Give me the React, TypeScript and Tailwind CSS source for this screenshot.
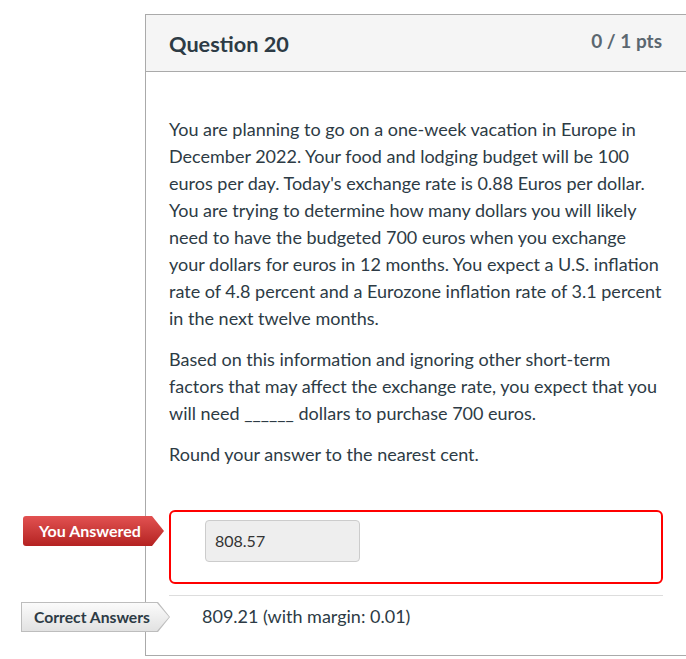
import React from "react";

const arrow = "[clip-path:polygon(0_0,calc(100%-12px)_0,100%_50%,calc(100%-12px)_100%,0_100%)]";

export default function App() {
  return (
    <div
      className="relative w-[686px] h-[659px] overflow-hidden bg-white text-[#2d3b45]"
      style={{ fontFamily: "Lato, 'Noto Sans', sans-serif" }}
    >
      <div className="pt-[14px] pl-[145px]">
        <div className="w-[542px] border-t border-l border-r border-b border-[#aaaaaa]">
          {/* header */}
          <div className="h-[57px] bg-[#f5f5f5] border-b border-[#aaaaaa] flex items-start justify-between pl-[23px] pr-[24px]">
            <h2 className="mt-[14px] text-[21.7px] leading-[30px] font-bold text-[#2d3b45]">Question 20</h2>
            <div className="mt-[13px] text-[19px] leading-[26px] font-bold text-[#5b6770]">0 / 1 pts</div>
          </div>
          {/* body */}
          <div className="pl-[23px] pr-[24px] pt-[44px]">
            <div className="w-[494px] text-[18px] leading-[27px]">
              <p>
                You are planning to go on a one-week vacation in Europe in December 2022. Your food and lodging budget will be 100 euros per day. Today's exchange rate is 0.88 Euros per dollar. You are trying to determine how many dollars you will likely need to have the budgeted 700 euros when you exchange your dollars for euros in 12 months. You expect a U.S. inflation rate of 4.8 percent and a Eurozone inflation rate of 3.1 percent in the next twelve months.
              </p>
              <p className="mt-[14px]">
                Based on this information and ignoring other short-term factors that may affect the exchange rate, you expect that you will need ______ dollars to purchase 700 euros.
              </p>
              <p className="mt-[14px]">Round your answer to the nearest cent.</p>
            </div>

            {/* answered */}
            <div className="relative mt-[42px] w-[494px] h-[74px] border-2 border-[#ff0000] rounded-[6px] pl-[34px] pt-[8px]">
              <div className="w-[155px] h-[42px] bg-[#eeeeee] border border-[#cccccc] rounded-[4px] pl-[9px] flex items-center text-[16px] text-[#333333]">
                808.57
              </div>
              <div className={`absolute left-[-148px] top-[4px] w-[141px] h-[30px] ${arrow} bg-gradient-to-b from-[#e25151] to-[#b42121] rounded-l-[3px] flex items-center pl-[16px] text-white font-bold text-[16px]`}>
                You Answered
              </div>
            </div>

            <div className="mt-[11px] w-[494px] border-t border-[#dddddd]" />

            {/* correct */}
            <div className="relative w-[494px] h-[59px] pt-[7px] pl-[33px] text-[18px] leading-[27px]">
              809.21 (with margin: 0.01)
              <div className={`absolute left-[-148px] top-[6px] w-[149px] h-[30px] ${arrow} bg-[#bdbdbd]`}>
                <div className={`absolute left-[1px] top-[1px] w-[147px] h-[28px] ${arrow} bg-gradient-to-b from-[#fbfbfb] to-[#e2e2e2] flex items-center pl-[12px] text-[#2d3b45] font-bold text-[15.7px]`}>
                  Correct Answers
                </div>
              </div>
            </div>
          </div>
        </div>
      </div>
    </div>
  );
}
